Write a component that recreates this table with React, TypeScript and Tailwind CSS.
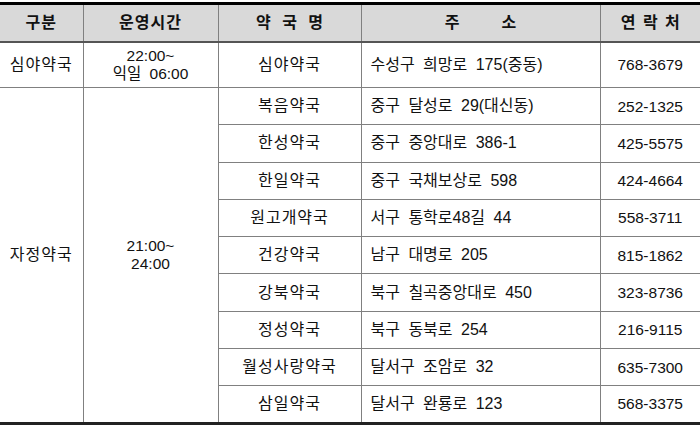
const rows = [
  { name: "복음약국", addr: "중구 달성로 29(대신동)", tel: "252-1325" },
  { name: "한성약국", addr: "중구 중앙대로 386-1", tel: "425-5575" },
  { name: "한일약국", addr: "중구 국채보상로 598", tel: "424-4664" },
  { name: "원고개약국", addr: "서구 통학로48길 44", tel: "558-3711" },
  { name: "건강약국", addr: "남구 대명로 205", tel: "815-1862" },
  { name: "강북약국", addr: "북구 칠곡중앙대로 450", tel: "323-8736" },
  { name: "정성약국", addr: "북구 동북로 254", tel: "216-9115" },
  { name: "월성사랑약국", addr: "달서구 조암로 32", tel: "635-7300" },
  { name: "삼일약국", addr: "달서구 완룡로 123", tel: "568-3375" },
]

const cell = "border border-[#808080] text-center align-middle"

export default function App() {
  return (
    <div className="w-[700px] h-[427px] bg-white pt-[2px] overflow-hidden font-['Liberation_Sans','Noto_Sans_CJK_KR',sans-serif] text-[16px] text-[#111] [word-spacing:4px]">
      <table className="w-[700px] border-collapse table-fixed border-t-[3px] border-b-[3px] border-t-black border-b-[#222]">
        <colgroup>
          <col className="w-[83px]" />
          <col className="w-[135px]" />
          <col className="w-[143px]" />
          <col className="w-[239px]" />
          <col className="w-[100px]" />
        </colgroup>
        <thead>
          <tr className="h-[38px] bg-[#d9d9d9] font-bold text-[16px]">
            <th className={`${cell} border-l-0 border-t-0 border-b-2 border-b-[#555] tracking-[1px]`}>구분</th>
            <th className={`${cell} border-t-0 border-b-2 border-b-[#555] tracking-[1px]`}>운영시간</th>
            <th className={`${cell} border-t-0 border-b-2 border-b-[#555] whitespace-pre [word-spacing:7px]`}>약 국 명</th>
            <th className={`${cell} border-t-0 border-b-2 border-b-[#555] whitespace-pre [word-spacing:4px]`}>주     소</th>
            <th className={`${cell} border-r-0 border-t-0 border-b-2 border-b-[#555] whitespace-pre [word-spacing:3px]`}>연 락 처</th>
          </tr>
        </thead>
        <tbody>
          <tr className="h-[46px]">
            <td className={`${cell} border-l-0 tracking-[1px]`}>심야약국</td>
            <td className={`${cell} leading-[18px] text-[15.5px]`}>
              22:00~
              <br />
              익일 06:00
            </td>
            <td className={`${cell} tracking-[1px]`}>심야약국</td>
            <td className={`${cell} text-left pl-[9px] whitespace-pre`}>수성구 희망로 175(중동)</td>
            <td className={`${cell} border-r-0 text-[15.5px]`}>768-3679</td>
          </tr>
          {rows.map((r, i) => (
            <tr key={r.name} className="h-[37.3px]">
              {i === 0 && (
                <>
                  <td rowSpan={rows.length} className={`${cell} border-l-0 border-b-0 tracking-[1px]`}>
                    자정약국
                  </td>
                  <td rowSpan={rows.length} className={`${cell} border-b-0 leading-[18px] text-[15.5px]`}>
                    21:00~
                    <br />
                    24:00
                  </td>
                </>
              )}
              <td className={`${cell} tracking-[1px] ${i === rows.length - 1 ? "border-b-0" : ""}`}>{r.name}</td>
              <td className={`${cell} text-left pl-[9px] whitespace-pre ${i === rows.length - 1 ? "border-b-0" : ""}`}>
                {r.addr}
              </td>
              <td className={`${cell} border-r-0 text-[15.5px] ${i === rows.length - 1 ? "border-b-0" : ""}`}>{r.tel}</td>
            </tr>
          ))}
        </tbody>
      </table>
    </div>
  )
}
